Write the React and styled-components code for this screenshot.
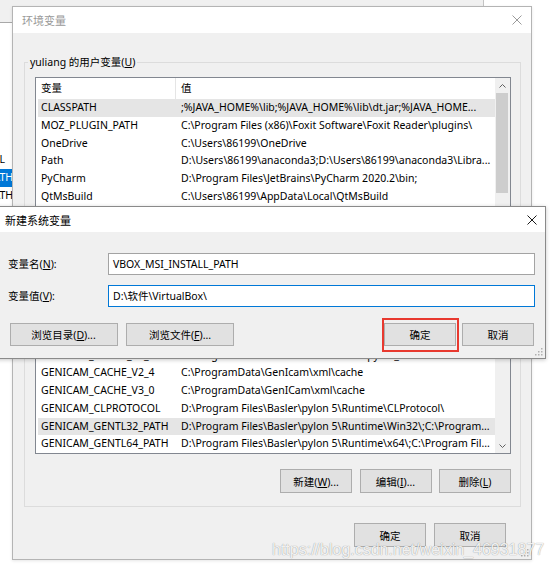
import React from 'react'
import styled, { createGlobalStyle } from 'styled-components'

const GlobalStyle = createGlobalStyle`
  html, body {
    margin: 0;
    padding: 0;
    background: #fff;
  }
  * { box-sizing: border-box; }
`

const Desktop = styled.div`
  position: relative;
  width: 554px;
  height: 567px;
  overflow: hidden;
  background: #fff;
  font-family: "Noto Sans", "Noto Sans CJK SC", sans-serif;
  font-size: 10.5px;
  color: #000;
`

/* window sitting behind everything, only its edges peek out */
const BackWindow = styled.div`
  position: absolute;
  left: -60px;
  top: -20px;
  width: 544px;
  height: 400px;
  background: #fff;
  border-right: 1px solid #c4c4c4;
  display: flex;
  flex-direction: column;
`

const BackBar = styled.div`
  height: 43px;
  flex-shrink: 0;
  background: #f0f0f0;
  border-bottom: 1px solid #a8a8a8;
`

const BackList = styled.div`
  width: 73px;
  padding-top: 128px;
  display: flex;
  flex-direction: column;
`

const BackRow = styled.div`
  height: 17.75px;
  line-height: 17.75px;
  display: flex;
  justify-content: flex-end;
  overflow: hidden;
  white-space: nowrap;
  padding-right: ${p => p.$pad || 0}px;
  background: ${p => (p.$selected ? '#0078d7' : 'transparent')};
  color: ${p => (p.$selected ? '#fff' : '#000')};
`

const Window = styled.div`
  position: absolute;
  left: ${p => p.$left}px;
  top: ${p => p.$top}px;
  width: ${p => p.$width}px;
  height: ${p => p.$height}px;
  background: #f0f0f0;
  border: 1px solid ${p => (p.$active ? '#8a8a8a' : '#b4b4b4')};
  box-shadow: ${p => (p.$active ? '0 1px 4px rgba(0,0,0,0.22)' : '0 1px 3px rgba(0,0,0,0.1)')};
  display: flex;
  flex-direction: column;
`

const TitleBar = styled.div`
  height: ${p => p.$h}px;
  flex-shrink: 0;
  background: #fff;
  display: flex;
  align-items: center;
  justify-content: space-between;
  padding: 0 ${p => p.$right}px 0 ${p => p.$left}px;
  color: ${p => (p.$active ? '#000' : '#999')};
  font-size: 11px;
`

const CloseGlyph = ({ color }) => (
  <svg width="10" height="10" viewBox="0 0 10 10">
    <path d="M0.5 0.5 L9.5 9.5 M9.5 0.5 L0.5 9.5" stroke={color} strokeWidth="1" fill="none" />
  </svg>
)

const Grip = styled.div`
  position: absolute;
  right: 2px;
  bottom: 2px;
  width: 8px;
  height: 8px;
  display: flex;
`

const GripDots = () => (
  <Grip>
    <svg width="8" height="8" viewBox="0 0 8 8">
      {[[6, 0], [6, 3], [3, 3], [6, 6], [3, 6], [0, 6]].map(([x, y], i) => (
        <rect key={i} x={x} y={y} width="1.5" height="1.5" fill="#b0b0b0" />
      ))}
    </svg>
  </Grip>
)

/* ---------- 环境变量 ---------- */

const MainBody = styled.div`
  flex: 1;
  display: flex;
  flex-direction: column;
  padding: 22px 10px 12px 11px;
`

const Group = styled.fieldset`
  margin: ${p => p.$gap || 0}px 0 0 0;
  padding: 0;
  min-width: 0;
  border: 1px solid #dcdcdc;
  display: flex;
  flex-direction: column;
`

const GroupLabel = styled.legend`
  padding: 0 2px;
  margin-left: 3px;
  line-height: 14px;
  font-size: 10.5px;
  color: #000;
`

const ListBox = styled.div`
  height: ${p => p.$h}px;
  margin: 8px 9px 0 10px;
  border: 1px solid #828790;
  background: #fff;
  display: flex;
`

const ListMain = styled.div`
  flex: 1;
  min-width: 0;
  display: flex;
  flex-direction: column;
`

const HeaderRow = styled.div`
  height: 21px;
  flex-shrink: 0;
  display: grid;
  grid-template-columns: 140px 1fr;
`

const HeaderCell = styled.div`
  line-height: 21px;
  padding-left: 5px;
  border-right: ${p => (p.$divider ? '1px solid #e5e5e5' : 'none')};
`

const Rows = styled.div`
  flex: 1;
  min-height: 0;
  overflow: hidden;
  display: flex;
  flex-direction: column;
  justify-content: ${p => (p.$bottom ? 'flex-end' : 'flex-start')};
`

const Row = styled.div`
  height: 17.75px;
  flex-shrink: 0;
  margin-left: 2px;
  display: grid;
  grid-template-columns: 138px 1fr;
  line-height: 17.75px;
  background: ${p => (p.$selected ? '#e5e5e5' : 'transparent')};
`

const Cell = styled.div`
  padding-left: ${p => (p.$first ? 3 : 5)}px;
  white-space: nowrap;
  overflow: hidden;
`

const ScrollBar = styled.div`
  width: 15px;
  flex-shrink: 0;
  background: #f0f0f0;
  display: flex;
  flex-direction: column;
  justify-content: ${p => (p.$bottom ? 'flex-end' : 'flex-start')};
`

const ScrollArrow = styled.div`
  height: 15px;
  display: flex;
  align-items: center;
  justify-content: center;
`

const Thumb = styled.div`
  height: ${p => p.$h}px;
  margin: 0 2px 0 1px;
  background: #cdcdcd;
`

const Chevron = ({ down }) => (
  <svg width="7" height="4" viewBox="0 0 7 4">
    <path d={down ? 'M0.5 0.5 L3.5 3.5 L6.5 0.5' : 'M0.5 3.5 L3.5 0.5 L6.5 3.5'} stroke="#606060" fill="none" strokeWidth="1" />
  </svg>
)

const ButtonRow = styled.div`
  display: flex;
  justify-content: ${p => p.$justify || 'flex-end'};
  align-items: center;
  gap: ${p => p.$gap || 7.5}px;
  margin: ${p => p.$margin};
`

const Button = styled.button`
  width: ${p => p.$w || 72}px;
  height: ${p => p.$h || 24}px;
  padding: 0;
  background: #e1e1e1;
  border: 1px solid #adadad;
  border-radius: 0;
  font-family: inherit;
  font-size: 10.5px;
  color: #000;
  display: flex;
  align-items: center;
  justify-content: center;
  flex-shrink: 0;
`

/* red box drawn round the button to point at it */
const Marked = styled.div`
  position: relative;
  &::after {
    content: '';
    position: absolute;
    left: -2px;
    right: -3px;
    top: -4.5px;
    bottom: -6.5px;
    border: 2px solid #e8392f;
    pointer-events: none;
  }
`

const Spacer = styled.div`
  flex: 1;
`

/* ---------- 新建系统变量 ---------- */

const FormBody = styled.div`
  flex: 1;
  display: flex;
  flex-direction: column;
  padding: 21px 10px 0 17px;
`

const FormGrid = styled.div`
  display: grid;
  grid-template-columns: 100px 1fr;
  row-gap: 10px;
  align-items: center;
`

const FieldLabel = styled.label`
  line-height: 22px;
`

const TextField = styled.div`
  height: 22px;
  border: 1px solid ${p => (p.$focused ? '#0078d7' : '#a3a3a3')};
  background: #fff;
  padding-left: 4px;
  line-height: 20px;
  white-space: nowrap;
  overflow: hidden;
`

const Watermark = styled.div`
  position: absolute;
  left: 272px;
  top: 541px;
  font-family: "Liberation Sans", Arial, sans-serif;
  font-size: 16px;
  line-height: 18px;
  white-space: nowrap;
  color: rgba(255, 255, 255, 0.9);
  text-shadow: 0 0 1px rgba(0, 0, 0, 0.3), 0 0 1px rgba(0, 0, 0, 0.2);
  pointer-events: none;
`

const userVars = [
  ['CLASSPATH', ';%JAVA_HOME%\\lib;%JAVA_HOME%\\lib\\dt.jar;%JAVA_HOME...', true],
  ['MOZ_PLUGIN_PATH', 'C:\\Program Files (x86)\\Foxit Software\\Foxit Reader\\plugins\\'],
  ['OneDrive', 'C:\\Users\\86199\\OneDrive'],
  ['Path', 'D:\\Users\\86199\\anaconda3;D:\\Users\\86199\\anaconda3\\Libra...'],
  ['PyCharm', 'D:\\Program Files\\JetBrains\\PyCharm 2020.2\\bin;'],
  ['QtMsBuild', 'C:\\Users\\86199\\AppData\\Local\\QtMsBuild'],
  ['TEMP', 'C:\\Users\\86199\\AppData\\Local\\Temp'],
  ['TMP', 'C:\\Users\\86199\\AppData\\Local\\Temp'],
]

const systemVars = [
  ['ComSpec', 'C:\\WINDOWS\\system32\\cmd.exe'],
  ['DriverData', 'C:\\Windows\\System32\\Drivers\\DriverData'],
  ['GENICAM_CACHE_V2_3', 'C:\\ProgramData\\GenIcam\\xml\\cache\\pylon_5'],
  ['GENICAM_CACHE_V2_4', 'C:\\ProgramData\\GenIcam\\xml\\cache'],
  ['GENICAM_CACHE_V3_0', 'C:\\ProgramData\\GenICam\\xml\\cache'],
  ['GENICAM_CLPROTOCOL', 'D:\\Program Files\\Basler\\pylon 5\\Runtime\\CLProtocol\\'],
  ['GENICAM_GENTL32_PATH', 'D:\\Program Files\\Basler\\pylon 5\\Runtime\\Win32\\;C:\\Program...', true],
  ['GENICAM_GENTL64_PATH', 'D:\\Program Files\\Basler\\pylon 5\\Runtime\\x64\\;C:\\Program Fil...'],
]

const VarList = ({ height, rows, bottom, thumb }) => (
  <ListBox $h={height}>
    <ListMain>
      <HeaderRow>
        <HeaderCell $divider>变量</HeaderCell>
        <HeaderCell>值</HeaderCell>
      </HeaderRow>
      <Rows $bottom={bottom}>
        {rows.map(([name, value, selected]) => (
          <Row key={name} $selected={selected}>
            <Cell $first>{name}</Cell>
            <Cell>{value}</Cell>
          </Row>
        ))}
      </Rows>
    </ListMain>
    <ScrollBar $bottom={bottom}>
      {bottom ? (
        <ScrollArrow><Chevron down /></ScrollArrow>
      ) : (
        <>
          <ScrollArrow><Chevron /></ScrollArrow>
          <Thumb $h={thumb} />
        </>
      )}
    </ScrollBar>
  </ListBox>
)

const Key = ({ label, k, dots }) => (
  <span>
    {label}(<u>{k}</u>){dots ? '...' : ''}
  </span>
)

export default function App() {
  return (
    <Desktop>
      <GlobalStyle />

      <BackWindow>
        <BackBar />
        <BackList>
          <BackRow $pad={8}>GENICAM_CLPROTOCOL</BackRow>
          <BackRow $selected>GENICAM_GENTL32_PATH</BackRow>
          <BackRow>GENICAM_GENTL64_PATH</BackRow>
        </BackList>
      </BackWindow>

      <Window $left={12} $top={6} $width={520} $height={554}>
        <TitleBar $h={26} $left={9} $right={9}>
          <span>环境变量</span>
          <CloseGlyph color="#9a9a9a" />
        </TitleBar>
        <MainBody>
          <Group>
            <GroupLabel>yuliang 的用户变量(<u>U</u>)</GroupLabel>
            <VarList height={150} rows={userVars} thumb={100} />
            <ButtonRow $margin="15px 9px 13px 0">
              <Button><Key label="新建" k="N" dots /></Button>
              <Button><Key label="编辑" k="E" dots /></Button>
              <Button><Key label="删除" k="D" /></Button>
            </ButtonRow>
          </Group>
          <Group $gap={10}>
            <GroupLabel>系统变量(<u>S</u>)</GroupLabel>
            <VarList height={142} rows={systemVars} bottom />
            <ButtonRow $margin="15px 9px 13px 0">
              <Button><Key label="新建" k="W" dots /></Button>
              <Button><Key label="编辑" k="I" dots /></Button>
              <Button><Key label="删除" k="L" /></Button>
            </ButtonRow>
          </Group>
          <ButtonRow $gap={8} $margin="16px 15px 0 0">
            <Button>确定</Button>
            <Button>取消</Button>
          </ButtonRow>
        </MainBody>
        <GripDots />
      </Window>

      <Window $active $left={-10} $top={206} $width={556} $height={153}>
        <TitleBar $active $h={25} $left={14} $right={8}>
          <span>新建系统变量</span>
          <CloseGlyph color="#1a1a1a" />
        </TitleBar>
        <FormBody>
          <FormGrid>
            <FieldLabel>变量名(<u>N</u>):</FieldLabel>
            <TextField>VBOX_MSI_INSTALL_PATH</TextField>
            <FieldLabel>变量值(<u>V</u>):</FieldLabel>
            <TextField $focused>D:\软件\VirtualBox\</TextField>
          </FormGrid>
          <ButtonRow $justify="flex-start" $gap={8.5} $margin="15.5px 1px 0 1.5px">
            <Button $w={108} $h={23}><Key label="浏览目录" k="D" dots /></Button>
            <Button $w={108} $h={23}><Key label="浏览文件" k="F" dots /></Button>
            <Spacer />
            <Marked>
              <Button $h={23}>确定</Button>
            </Marked>
            <Button $h={23} style={{ marginLeft: -2.5 }}>取消</Button>
          </ButtonRow>
        </FormBody>
        <GripDots />
      </Window>

      <Watermark>https://blog.csdn.net/weixin_46931877</Watermark>
    </Desktop>
  )
}
